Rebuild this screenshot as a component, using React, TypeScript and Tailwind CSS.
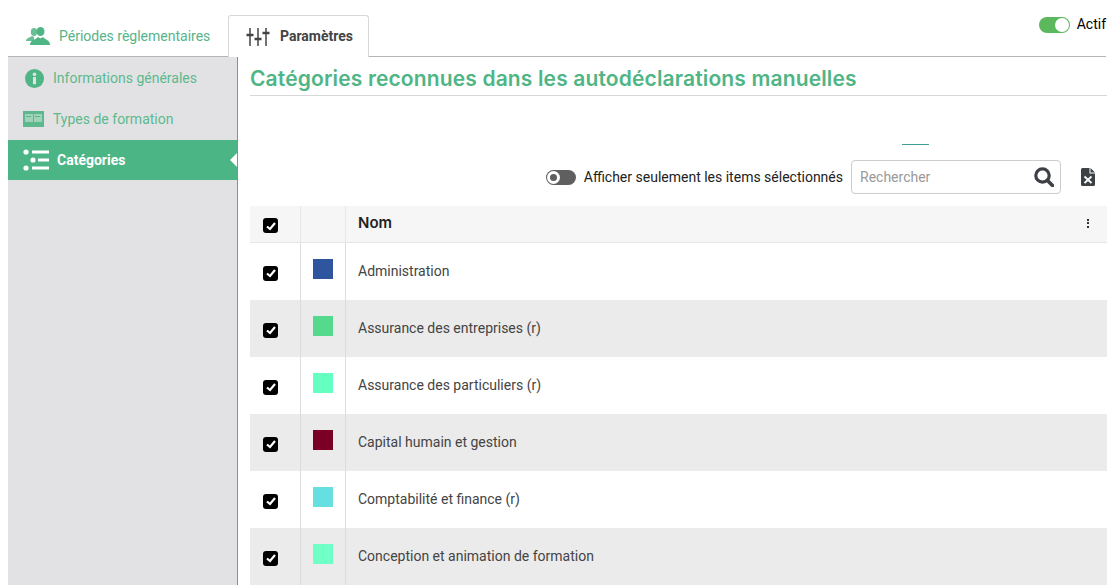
const CATEGORIES = [
  { name: "Administration", color: "bg-[#2f559f]" },
  { name: "Assurance des entreprises (r)", color: "bg-[#55d98c]" },
  { name: "Assurance des particuliers (r)", color: "bg-[#66ffc2]" },
  { name: "Capital humain et gestion", color: "bg-[#7a0026]" },
  { name: "Comptabilité et finance (r)", color: "bg-[#66dfe0]" },
  { name: "Conception et animation de formation", color: "bg-[#70ffc6]" },
];

function Check() {
  return (
    <span className="flex h-[15px] w-[15px] items-center justify-center rounded-[3px] bg-black">
      <svg viewBox="0 0 12 12" className="h-[12px] w-[12px]" fill="none" stroke="white" strokeWidth="2.2">
        <path d="M2 6.5 L5 9 L10 3" />
      </svg>
    </span>
  );
}

function PeopleIcon() {
  return (
    <svg viewBox="0 0 24 18" className="h-[18px] w-[24px]" fill="#4fb585">
      <ellipse cx="8" cy="5" rx="3.2" ry="4" opacity="0.85" />
      <path d="M0 14 C0 11 4 10.5 6 9 L8 10 L8 14 Z" opacity="0.85" />
      <ellipse cx="14.5" cy="4.5" rx="4" ry="4.5" />
      <path d="M4 18 C4 13 9.5 13 12 10 L14.5 11.5 L17 10 C19.5 13 24 13 24 18 Z" />
    </svg>
  );
}

function SlidersIcon() {
  return (
    <svg viewBox="0 0 24 18" className="h-[18px] w-[24px]" fill="none" stroke="#444">
      <path d="M4 0 V18 M12 0 V18 M20 0 V18" strokeWidth="1.5" />
      <path d="M0.5 7 H7.5 M8.5 11 H15.5 M16.5 5 H23.5" strokeWidth="2.4" />
    </svg>
  );
}

function InfoIcon() {
  return (
    <svg viewBox="0 0 20 20" className="h-[19px] w-[19px]">
      <circle cx="10" cy="10" r="10" fill="#4fb585" />
      <rect x="8.4" y="8.5" width="3.2" height="7.5" fill="#e2e2e4" />
      <circle cx="10" cy="5.6" r="1.9" fill="#e2e2e4" />
    </svg>
  );
}

function BookIcon() {
  return (
    <svg viewBox="0 0 21 16" className="h-[16px] w-[21px]">
      <rect width="21" height="16" fill="#5db98d" />
      <rect x="2" y="3" width="8" height="8" fill="#9ed3ba" />
      <rect x="11" y="3" width="8" height="8" fill="#9ed3ba" />
      <rect x="3" y="5" width="5" height="1" fill="#5db98d" />
      <rect x="12" y="5" width="5" height="1" fill="#5db98d" />
    </svg>
  );
}

function ListIcon() {
  return (
    <svg viewBox="0 0 27 22" className="h-[22px] w-[27px]" fill="white">
      <circle cx="3" cy="3" r="2.6" />
      <circle cx="10" cy="11" r="2.6" />
      <circle cx="3" cy="19" r="2.6" />
      <rect x="9" y="1.5" width="17" height="3" />
      <rect x="15" y="9.5" width="11" height="3" />
      <rect x="9" y="17.5" width="17" height="3" />
    </svg>
  );
}

function SearchIcon() {
  return (
    <svg viewBox="0 0 20 20" className="h-[20px] w-[20px]" fill="none" stroke="#3d4045">
      <circle cx="8.5" cy="8.5" r="6.7" strokeWidth="3.2" />
      <path d="M13.5 13.5 L18.5 18.5" strokeWidth="3.6" strokeLinecap="round" />
    </svg>
  );
}

function ExcelIcon() {
  return (
    <svg viewBox="0 0 14 18" className="h-[18px] w-[14px]">
      <path d="M0 1.5 Q0 0 1.5 0 H8.5 V5.5 H14 V16.5 Q14 18 12.5 18 H1.5 Q0 18 0 16.5 Z" fill="#3d4045" />
      <path d="M9.5 0 L14 4.5 H9.5 Z" fill="#3d4045" />
      <path d="M3.5 8.5 L10.5 15 M10.5 8.5 L3.5 15" stroke="white" strokeWidth="1.8" />
    </svg>
  );
}

export default function App() {
  return (
    <div className="flex h-[585px] w-[1120px] flex-col overflow-hidden bg-white font-['Roboto',sans-serif] text-[14px]">
      {/* onglets */}
      <div className="flex h-[57px] shrink-0 items-end justify-between pl-[8px] pr-[14px]">
        <div className="flex h-full flex-1 items-end border-b border-[#b5b5b5]">
          <div className="flex h-[41px] w-[220px] items-center gap-[10px] pl-[18px] pt-[1px] text-[#56b48a]">
            <PeopleIcon />
            <span className="-ml-[1px]">Périodes règlementaires</span>
          </div>
          <div className="-mb-px flex h-[42px] w-[141px] items-center gap-[10px] rounded-t-[3px] border border-b-0 border-[#d8d8d8] bg-white pl-[17px] font-bold text-[#444]">
            <SlidersIcon />
            <span>Paramètres</span>
          </div>
          <div className="flex h-full flex-1 justify-end pt-[17px]">
            <div className="flex h-[16px] items-center">
              <span className="relative h-[16px] w-[31px] rounded-full bg-[#5cb85c]">
                <span className="absolute right-[1px] top-[1px] h-[14px] w-[14px] rounded-full bg-white" />
              </span>
              <span className="-mt-[2px] ml-[7px] text-black">Actif</span>
            </div>
          </div>
        </div>
      </div>

      <div className="flex min-h-0 flex-1 pl-[8px] pr-[13px]">
        {/* menu latéral */}
        <div className="flex w-[230px] shrink-0 flex-col border-r border-[#8e8e8e] bg-[#e2e2e4]">
          <div className="flex h-[41px] items-center gap-[9px] pl-[17px] pt-[1px] text-[#5db98d]">
            <InfoIcon />
            <span>Informations générales</span>
          </div>
          <div className="flex h-[42px] items-center gap-[9px] pl-[15px] text-[#5db98d]">
            <BookIcon />
            <span>Types de formation</span>
          </div>
          <div className="relative flex h-[40px] items-center gap-[7px] bg-[#4cb585] pl-[15px] font-bold text-white">
            <ListIcon />
            <span>Catégories</span>
            <span className="absolute right-0 top-[13px] h-0 w-0 border-y-[7px] border-r-[7px] border-y-transparent border-r-white" />
          </div>
        </div>

        {/* contenu */}
        <div className="min-w-0 flex-1 pl-[12px]">
          <h1 className="flex h-[39px] items-center border-b border-[#d8d8d8] pt-[5px] font-['Inter',sans-serif] text-[21px] font-semibold tracking-[0.14px] text-[#4fb585]">
            Catégories reconnues dans les autodéclarations manuelles
          </h1>

          <div className="flex h-[64px] justify-end pr-[178px]">
            <span className="mt-[48px] h-px w-[27px] bg-[#3f9e94]" />
          </div>

          <div className="flex h-[34px] items-center justify-end pr-[12px]">
            <span className="relative mr-[8px] h-[15px] w-[30px] rounded-full bg-[#5f5f5f]">
              <span className="absolute left-[1px] top-[1px] flex h-[13px] w-[13px] items-center justify-center rounded-full bg-white">
                <span className="h-[7px] w-[7px] rounded-full bg-[#5f5f5f]" />
              </span>
            </span>
            <span className="text-[#222]">Afficher seulement les items sélectionnés</span>
            <div className="ml-[8px] flex h-[34px] w-[210px] items-center justify-between rounded-[4px] border border-[#ccc] pl-[8px] pr-[6px] text-[#999]">
              <span>Rechercher</span>
              <SearchIcon />
            </div>
            <span className="ml-[20px] flex">
              <ExcelIcon />
            </span>
          </div>

          <div className="mt-[12px]">
            <div className="flex h-[37px] border-b border-[#e6e6e6] bg-[#f6f6f6]">
              <div className="flex w-[51px] items-center border-r border-[#e6e6e6] pl-[13px] pt-[3px]">
                <Check />
              </div>
              <div className="w-[45px] border-r border-[#e6e6e6]" />
              <div className="flex flex-1 items-center justify-between pb-[2px] pl-[12px] pr-[18px]">
                <span className="font-['Inter',sans-serif] text-[15px] font-semibold text-[#222]">Nom</span>
                <span className="flex flex-col gap-[1.5px]">
                  <span className="h-[2px] w-[2px] bg-[#333]" />
                  <span className="h-[2px] w-[2px] bg-[#333]" />
                  <span className="h-[2px] w-[2px] bg-[#333]" />
                </span>
              </div>
            </div>
            {CATEGORIES.map((cat, i) => (
              <div key={cat.name} className={`flex h-[57px] ${i % 2 === 1 ? "bg-[#ebebeb]" : "bg-white"}`}>
                <div className="flex w-[51px] items-center border-r border-[#dcdcdc] pl-[13px] pt-[3px]">
                  <Check />
                </div>
                <div className="flex w-[45px] justify-center border-r border-[#dcdcdc] pt-[16px]">
                  <span className={`h-[20px] w-[20px] ${cat.color}`} />
                </div>
                <div className="flex flex-1 items-center pl-[12px] text-[#444]">{cat.name}</div>
              </div>
            ))}
          </div>
        </div>
      </div>
    </div>
  );
}
